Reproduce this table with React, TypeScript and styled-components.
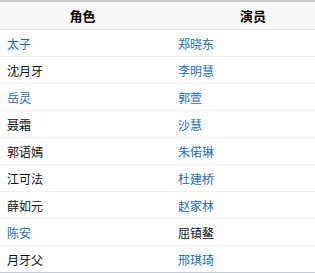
import styled, { createGlobalStyle } from 'styled-components';

const GlobalStyle = createGlobalStyle`
  html, body {
    margin: 0;
    padding: 0;
    background: #fff;
    font-family: "Noto Sans CJK SC", "Noto Sans", sans-serif;
  }
`;

type Cell = { text: string; link?: boolean };

const rows: [Cell, Cell][] = [
  [{ text: '太子', link: true }, { text: '郑晓东', link: true }],
  [{ text: '沈月牙' }, { text: '李明慧', link: true }],
  [{ text: '岳灵', link: true }, { text: '郭萱', link: true }],
  [{ text: '聂霜' }, { text: '沙慧', link: true }],
  [{ text: '郭语嫣' }, { text: '朱偌琳', link: true }],
  [{ text: '江可法' }, { text: '杜建桥', link: true }],
  [{ text: '薛如元' }, { text: '赵家林', link: true }],
  [{ text: '陈安', link: true }, { text: '屈镇鳌' }],
  [{ text: '月牙父' }, { text: '邢琪琦', link: true }],
];

export default function App() {
  return (
    <>
      <GlobalStyle />
      <Table>
        <HeadRow>
          <HeadCell $padLeft={0} $padRight={6}>角色</HeadCell>
          <HeadCell $padLeft={20} $padRight={0}>演员</HeadCell>
        </HeadRow>
        {rows.map((row, idx) => (
          <Row key={idx}>
            {row.map((cell, i) => (
              <BodyCell key={i} $link={!!cell.link}>
                {cell.text}
              </BodyCell>
            ))}
          </Row>
        ))}
      </Table>
    </>
  );
}

const Table = styled.div`
  width: 315px;
  border-top: 2px solid #cccccc;
  border-bottom: 2px solid #c4ccd4;
  box-sizing: border-box;
`;

const HeadRow = styled.div`
  display: grid;
  grid-template-columns: 171px 1fr;
  height: 28px;
  background: #f8f8f8;
  border-bottom: 1px solid #e4e4e4;
  box-sizing: border-box;
`;

const HeadCell = styled.div<{ $padLeft: number; $padRight: number }>`
  display: flex;
  align-items: center;
  justify-content: center;
  padding-left: ${(p) => p.$padLeft}px;
  padding-right: ${(p) => p.$padRight}px;
  font-size: 13px;
  font-weight: bold;
  color: #000;
`;

const Row = styled.div`
  display: grid;
  grid-template-columns: 171px 1fr;
  height: 27px;
  border-bottom: 1px solid #efefef;
  box-sizing: border-box;

  &:last-child {
    border-bottom: none;
    height: 26px;
  }
`;

const BodyCell = styled.div<{ $link: boolean }>`
  display: flex;
  align-items: center;
  padding-left: 7px;
  font-size: 12px;
  color: ${(p) => (p.$link ? '#1a6dc0' : '#111')};
`;
